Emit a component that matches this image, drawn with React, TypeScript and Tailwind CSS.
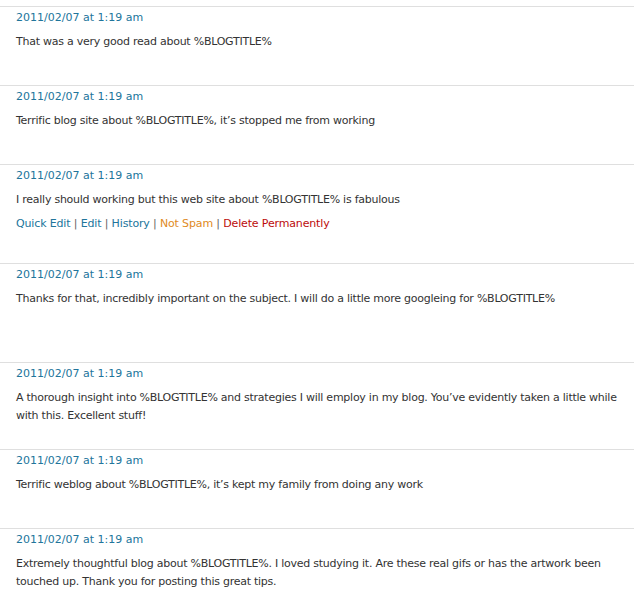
const rows: { h: string; lines: string[]; actions?: boolean }[] = [
  { h: "h-[79px]", lines: ["That was a very good read about %BLOGTITLE%"] },
  { h: "h-[79px]", lines: ["Terrific blog site about %BLOGTITLE%, it\u2019s stopped me from working"] },
  {
    h: "h-[99px]",
    lines: ["I really should working but this web site about %BLOGTITLE% is fabulous"],
    actions: true,
  },
  {
    h: "h-[99px]",
    lines: ["Thanks for that, incredibly important on the subject. I will do a little more googleing for %BLOGTITLE%"],
  },
  {
    h: "h-[87px]",
    lines: [
      "A thorough insight into %BLOGTITLE% and strategies I will employ in my blog. You\u2019ve evidently taken a little while",
      "with this. Excellent stuff!",
    ],
  },
  { h: "h-[79px]", lines: ["Terrific weblog about %BLOGTITLE%, it\u2019s kept my family from doing any work"] },
  {
    h: "h-[79px]",
    lines: [
      "Extremely thoughtful blog about %BLOGTITLE%. I loved studying it. Are these real gifs or has the artwork been",
      "touched up. Thank you for posting this great tips.",
    ],
  },
];

function RowActions() {
  return (
    <div className="mt-[6px] whitespace-nowrap leading-[18px] tracking-[-0.15px]">
      <a className="text-[#21759b]">Quick Edit</a>
      <span className="text-[#666]"> | </span>
      <a className="text-[#21759b]">Edit</a>
      <span className="text-[#666]"> | </span>
      <a className="text-[#21759b]">History</a>
      <span className="text-[#666]"> | </span>
      <a className="text-[#e08a1d]">Not Spam</a>
      <span className="text-[#666]"> | </span>
      <a className="text-[#bc0b0b]">Delete Permanently</a>
    </div>
  );
}

export default function App() {
  return (
    <div className="h-[600px] w-[634px] overflow-hidden bg-white pt-[6px] font-['DejaVu_Sans',sans-serif] text-[11px] text-[#333]">
      {rows.map((row, i) => (
        <div key={i} className={`${row.h} border-t border-[#dfdfdf] pl-4 pt-[2px]`}>
          <div className="leading-[18px] text-[#21759b]">2011/02/07 at 1:19 am</div>
          <div className="mt-[6px] leading-[18px] tracking-[-0.25px]">
            {row.lines.map((l, j) => (
              <div key={j} className="whitespace-nowrap">
                {l}
              </div>
            ))}
          </div>
          {row.actions && <RowActions />}
        </div>
      ))}
    </div>
  );
}
